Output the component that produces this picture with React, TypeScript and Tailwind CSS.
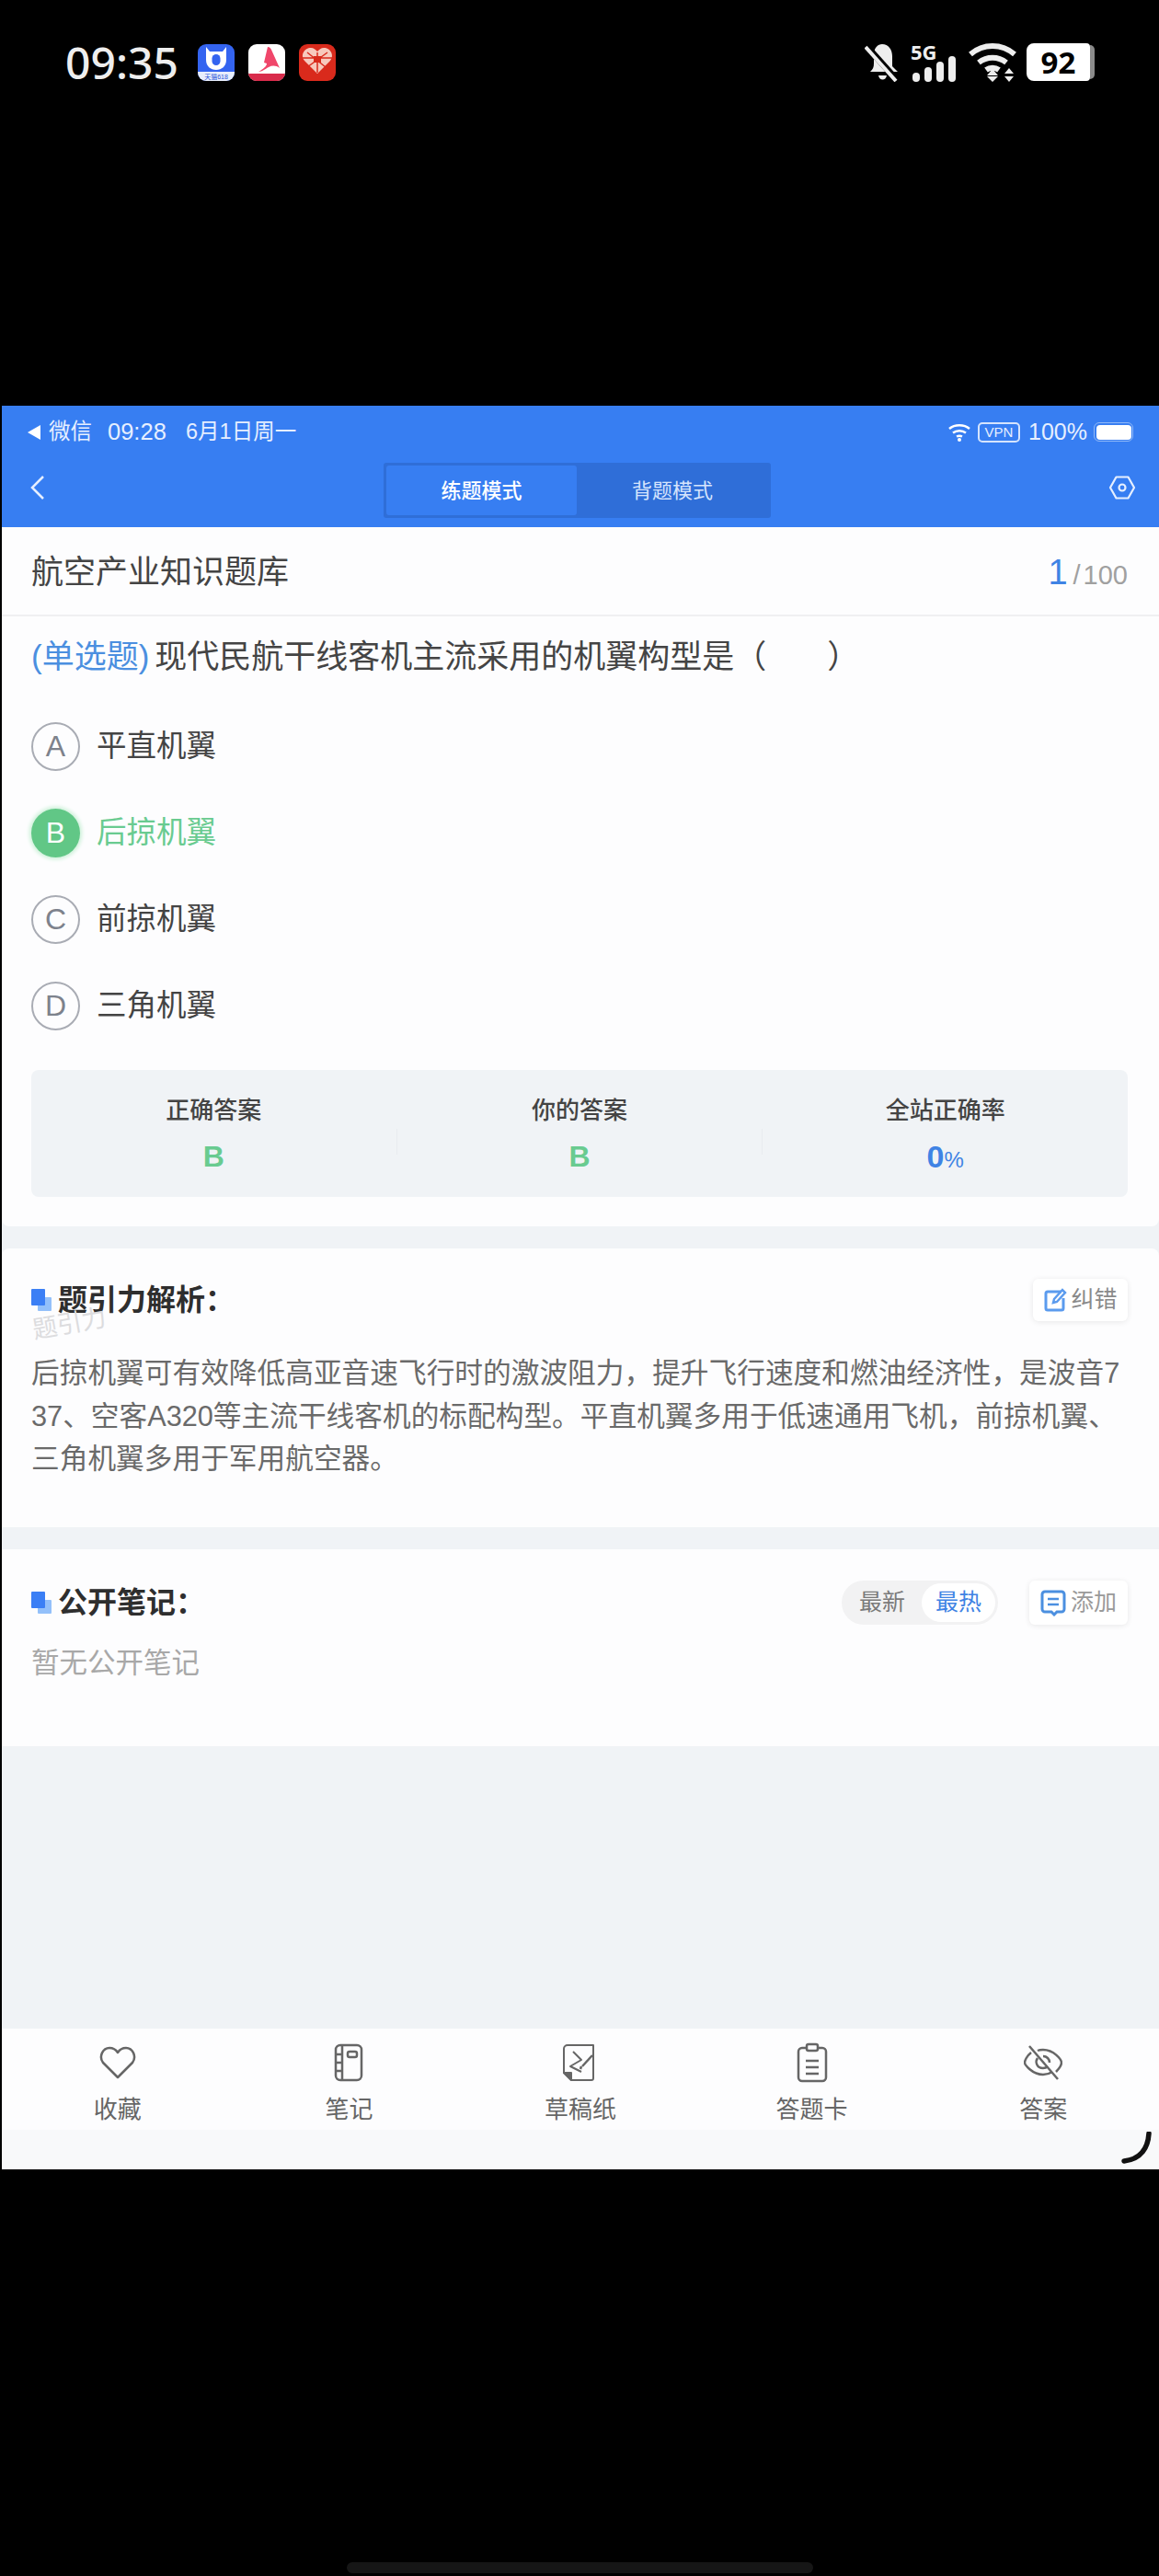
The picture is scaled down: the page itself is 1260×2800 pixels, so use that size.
const CJK = "font-['Liberation_Sans','Noto_Sans_CJK_SC',sans-serif]";

function TitleMark() {
  return (
    <svg width="22" height="24" viewBox="0 0 22 24" className="shrink-0">
      <rect x="7" y="9" width="15" height="15" rx="1" fill="#93c0fa" />
      <rect x="0" y="0" width="15" height="18" rx="1" fill="#3b7ff5" />
    </svg>
  );
}

function Option({ letter, text, on }: { letter: string; text: string; on?: boolean }) {
  return (
    <div className="flex h-[94px] items-center">
      <div
        className={
          on
            ? "flex h-[53px] w-[53px] items-center justify-center rounded-full bg-[#61c786] text-[32px] text-white shadow-[0_0_4px_2px_#c9f0d6]"
            : "flex h-[53px] w-[53px] items-center justify-center rounded-full border-2 border-[#a9acb4] text-[32px] text-[#7d828c]"
        }
      >
        {letter}
      </div>
      <div className={on ? "ml-[18px] text-[32.5px] text-[#69cb90]" : "ml-[18px] text-[32.5px] text-[#444444]"}>{text}</div>
    </div>
  );
}

function Stat({ label, children }: { label: string; children: React.ReactNode }) {
  return (
    <div className="flex flex-1 flex-col items-center">
      <div className="text-[26px] leading-[34px] font-medium text-[#444444]">{label}</div>
      <div className="mt-[16px] flex h-[34px] items-baseline leading-[34px]">{children}</div>
    </div>
  );
}

function TabItem({ label, children }: { label: string; children: React.ReactNode }) {
  return (
    <div className="flex flex-1 flex-col items-center pt-[15px]">
      <div className="flex h-[44px] items-center justify-center">{children}</div>
      <div className="mt-[14px] text-[26px] leading-[30px] text-[#666666]">{label}</div>
    </div>
  );
}

export default function App() {
  return (
    <div className={`flex h-[2800px] w-[1260px] flex-col bg-black ${CJK}`}>
      {/* phone status bar */}
      <div className="flex h-[441px] shrink-0 items-start justify-between pt-[47px] pr-[70px] pl-[71px]">
        <div className="flex items-center">
          <div className="w-[144px] font-['Noto_Sans',sans-serif] text-[48px] leading-[41px] font-medium text-[#eeeeee]">09:35</div>
          <svg width="40" height="40" viewBox="0 0 40 40" className="mt-[1px]">
            <rect width="40" height="40" rx="9" fill="#3464f0" />
            <path d="M0 30h40v1a9 9 0 0 1-9 9H9a9 9 0 0 1-9-9z" fill="#e8eefc" />
            <path d="M9 3l4 5h14l4-5v14c0 7-5 11-11 11S9 24 9 17z" fill="#fff" />
            <rect x="15.500" y="11" width="9" height="12" rx="4.500" fill="#3464f0" />
            <text x="20" y="38" textAnchor="middle" fontSize="7" fill="#2c55d8">天猫618</text>
          </svg>
          <svg width="40" height="40" viewBox="0 0 40 40" className="mt-[1px] ml-[15px]">
            <rect width="40" height="40" rx="9" fill="#fff" />
            <path d="M0 32h40a9 9 0 0 1-9 8H9a9 9 0 0 1-9-8z" fill="#d92b4b" />
            <path d="M21 3c2 0 3 1 4 3l9 20c-4-3-8-3-12-1-4 2-7 5-11 5 5-3 9-6 9-9l-3-1z" fill="#f0466a" />
          </svg>
          <svg width="40" height="40" viewBox="0 0 40 40" className="mt-[1px] ml-[15px]">
            <rect width="40" height="40" rx="9" fill="#d92a1c" />
            <path d="M20 32L6 18C1 12 6 4 13 4c3 0 5 2 7 4 2-2 4-4 7-4 7 0 12 8 7 14z" fill="#f7c9bd" />
            <path d="M20 9v22M9 9l20 16M31 9L9 25M4 15h32" stroke="#d92a1c" strokeWidth="1.500" />
            <rect x="16" y="13" width="8" height="7" fill="#d92a1c" />
          </svg>
        </div>
        <div className="flex items-start">
          <svg width="40" height="42" viewBox="0 0 40 42">
            <path d="M19 1c7 0 11 6 11 13v11l6 6H6c3-3 4-5 4-9V10C11 5 14 1 19 1z" fill="#eeeeee" />
            <path d="M15 35h9c-1 6-8 6-9 0z" fill="#eeeeee" />
            <path d="M2 3l34 38" stroke="#000" strokeWidth="7" />
            <path d="M1 4l33 37" stroke="#eeeeee" strokeWidth="4" />
          </svg>
          <div className="ml-[10px] w-[52px]">
            <div className="font-['Noto_Sans',sans-serif] text-[22px] leading-[18px] font-bold text-[#eeeeee]">5G</div>
            <svg width="52" height="28" viewBox="0 0 52 28" className="mt-[-4px]">
              <rect x="2" y="18" width="8" height="10" rx="4" fill="#eeeeee" />
              <rect x="15" y="12" width="8" height="16" rx="4" fill="#eeeeee" />
              <rect x="28" y="6" width="8" height="22" rx="4" fill="#eeeeee" />
              <rect x="41" y="0" width="8" height="28" rx="4" fill="#eeeeee" />
            </svg>
          </div>
          <svg width="54" height="42" viewBox="0 0 54 42" className="ml-[10px]" fill="none">
            <path d="M3 12c14-12 34-12 48 0" stroke="#eeeeee" strokeWidth="6" />
            <path d="M12 21c9-7 21-7 30 0" stroke="#eeeeee" strokeWidth="6" />
            <path d="M20 29c4-3 10-3 14 0" stroke="#eeeeee" strokeWidth="6" />
            <path d="M21 35h12l-6-7zM40 33h10l-5-6zM40 36h10l-5 6zM21 36l6 6 6-6z" fill="#eeeeee" />
          </svg>
          <div className="ml-[10px] flex h-[41px] w-[69px] items-center justify-center rounded-l-[8px] rounded-r-[4px] bg-white font-['Noto_Sans',sans-serif] text-[33px] font-bold text-black">92</div>
          <div className="mt-[2px] h-[37px] w-[5px] rounded-r-[5px] bg-[#8a8a8a]"></div>
        </div>
      </div>

      {/* app window */}
      <div className="relative flex h-[1917px] shrink-0 flex-col border-l-2 border-black bg-[#f0f3f6]">
        {/* blue header */}
        <div className="h-[132px] shrink-0 bg-[#377ef2]">
          <div className="flex h-[54px] items-center justify-between pt-[3px] pr-[28px] pl-[28px] text-[23.5px] text-[#e6efff]">
            <div className="flex items-center">
              <span className="mr-[9px] h-0 w-0 border-y-[8px] border-r-[14px] border-y-transparent border-r-white"></span>
              <span className="w-[64px]">微信</span>
              <span className="w-[85px] text-[25.500px]">09:28</span>
              <span>6月1日周一</span>
            </div>
            <div className="flex items-center">
              <svg width="24" height="20" viewBox="0 0 24 20" fill="none">
                <path d="M1 6c6-5 16-5 22 0M5 10.500c4-3 10-3 14 0M9 14.500c2-1 4-1 6 0" stroke="#fff" strokeWidth="2.500" />
                <circle cx="12" cy="18" r="2" fill="#fff" />
              </svg>
              <span className="ml-[8px] flex h-[22px] w-[46px] items-center justify-center rounded-[5px] border-2 border-[#d5e4fd] text-[15px] leading-none font-medium">VPN</span>
              <span className="ml-[9px] w-[71px] text-[25px]">100%</span>
              <span className="flex h-[21px] w-[43px] items-center justify-center rounded-[6px] border border-[#8fb8f8]">
                <span className="h-[16px] w-[38px] rounded-[4px] bg-white"></span>
              </span>
            </div>
          </div>
          <div className="flex h-[78px] items-center justify-between pr-[25px] pb-[2px] pl-[30px]">
            <svg width="18" height="28" viewBox="0 0 18 28" fill="none" className="mb-[6px]">
              <path d="M15 2L3 14l12 12" stroke="#e6efff" strokeWidth="2.500" />
            </svg>
            <div className="flex h-[60px] w-[421px] items-stretch rounded-[3px] bg-[#2f6ed8] p-[3px]">
              <div className="flex w-[207px] items-center justify-center rounded-[3px] bg-[#377ef2] text-[22px] font-medium text-white">练题模式</div>
              <div className="flex flex-1 items-center justify-center text-[22px] text-[#d5e4fd]">背题模式</div>
            </div>
            <svg width="30" height="30" viewBox="0 0 30 30" fill="none" className="mb-[6px]">
              <path d="M8.500 3.500h13L28 15l-6.500 11.500h-13L2 15z" stroke="#e6efff" strokeWidth="2.200" strokeLinejoin="round" />
              <circle cx="15" cy="15" r="3.500" stroke="#e6efff" strokeWidth="2.200" />
            </svg>
          </div>
        </div>

        {/* question */}
        <div className="shrink-0 rounded-b-[8px] bg-[#fdfdfe]">
          <div className="flex h-[97px] items-center justify-between border-b-2 border-[#f0f0f2] pt-[4px] pr-[34px] pl-[32px]">
            <div className="text-[35px] text-[#444444]">航空产业知识题库</div>
            <div className="flex items-baseline">
              <span className="text-[38px] text-[#3f83e4]">1</span>
              <span className="ml-[6px] text-[29px] text-[#a0a0a0]">/</span>
              <span className="ml-[3px] text-[29px] text-[#a0a0a0]">100</span>
            </div>
          </div>
          <div className="pr-[34px] pb-[32px] pl-[32px]">
            <div className="flex h-[86px] items-center whitespace-pre pt-[2px] text-[35px] text-[#444444]">
              <span className="mr-[6px] text-[#4b8fe0]">(单选题)</span>
              现代民航干线客机主流采用的机翼构型是（
              <span className="inline-block w-[66px]"></span>）
            </div>
            <div className="pt-[8px]">
              <Option letter="A" text="平直机翼" />
              <Option letter="B" text="后掠机翼" on />
              <Option letter="C" text="前掠机翼" />
              <Option letter="D" text="三角机翼" />
            </div>
            <div className="mt-[23px] flex h-[138px] items-center rounded-[8px] bg-[#f0f3f6]">
              <Stat label="正确答案"><span className="text-[32px] font-bold text-[#69cb90]">B</span></Stat>
              <div className="mt-[18px] h-[28px] w-px bg-[#e8ebef]"></div>
              <Stat label="你的答案"><span className="text-[32px] font-bold text-[#69cb90]">B</span></Stat>
              <div className="mt-[18px] h-[28px] w-px bg-[#e8ebef]"></div>
              <Stat label="全站正确率">
                <span className="text-[34px] font-bold text-[#3f83e4]">0</span>
                <span className="text-[24px] text-[#3f83e4]">%</span>
              </Stat>
            </div>
          </div>
        </div>

        {/* analysis */}
        <div className="relative mt-[24px] h-[303px] shrink-0 rounded-t-[8px] bg-[#fdfdfe] pr-[34px] pl-[32px]">
          <div className="flex h-[112px] items-center justify-between">
            <div className="flex items-center">
              <TitleMark />
              <span className="ml-[7px] text-[32px] font-bold text-[#2e2e2e]">题引力解析：</span>
            </div>
            <div className="flex h-[46px] w-[103px] items-center justify-center rounded-[6px] bg-white shadow-[0_1px_6px_rgba(0,0,0,0.09)]">
              <svg width="26" height="28" viewBox="0 0 26 28" fill="none" className="mr-[4px]">
                <path d="M20 5H5a2 2 0 0 0-2 2v16a2 2 0 0 0 2 2h15a2 2 0 0 0 2-2V12" stroke="#5b9bee" strokeWidth="3" />
                <path d="M11 17l1-4L21 3l3 3-9 10z" stroke="#5b9bee" strokeWidth="2.500" />
              </svg>
              <span className="text-[25px] text-[#8a8a8a]">纠错</span>
            </div>
          </div>
          <div className="absolute top-[62px] left-[33px] -rotate-[10deg] text-[27px] text-[#dcdcde]">题引力</div>
          <div className="mt-[1px] w-[1192px] text-[30.700px] leading-[46.500px] break-all text-[#6a6a6a]">
            后掠机翼可有效降低高亚音速飞行时的激波阻力，提升飞行速度和燃油经济性，是波音737、空客A320等主流干线客机的标配构型。平直机翼多用于低速通用飞机，前掠机翼、三角机翼多用于军用航空器。
          </div>
        </div>

        {/* notes */}
        <div className="mt-[24px] h-[214px] shrink-0 bg-[#fdfdfe] pr-[34px] pl-[32px]">
          <div className="flex h-[116px] items-center justify-between">
            <div className="flex items-center">
              <TitleMark />
              <span className="ml-[7px] text-[32px] font-bold text-[#2e2e2e]">公开笔记：</span>
            </div>
            <div className="flex items-center">
              <div className="flex h-[48px] w-[170px] items-center rounded-full bg-[#f2f2f3] p-[3px]">
                <span className="w-[84px] pl-[16px] text-[25px] text-[#7a7a7a]">最新</span>
                <span className="flex h-[42px] flex-1 items-center justify-center rounded-full bg-white text-[25px] text-[#3f83e4]">最热</span>
              </div>
              <div className="ml-[34px] flex h-[48px] w-[107px] items-center justify-center rounded-[6px] bg-white shadow-[0_1px_6px_rgba(0,0,0,0.09)]">
                <svg width="28" height="30" viewBox="0 0 28 30" fill="none" className="mr-[5px]">
                  <path d="M5 3h18a3 3 0 0 1 3 3v16a3 3 0 0 1-3 3h-5l-3 3-3-3H5a3 3 0 0 1-3-3V6a3 3 0 0 1 3-3z" stroke="#4b8fe0" strokeWidth="3" />
                  <path d="M8 11h12M8 17h12" stroke="#4b8fe0" strokeWidth="2.500" />
                </svg>
                <span className="text-[25px] text-[#9a9a9a]">添加</span>
              </div>
            </div>
          </div>
          <div className="-mt-[15px] text-[30.500px] leading-[44px] text-[#a8a8a8]">暂无公开笔记</div>
        </div>

        <div className="flex-1"></div>

        {/* tab bar */}
        <div className="flex h-[110px] shrink-0 bg-[#fdfdfe]">
          <TabItem label="收藏">
            <svg width="40" height="38" viewBox="0 0 40 38" fill="none">
              <path d="M20 35L4 19C-1 12 4 3 11 3c4 0 7 2 9 5 2-3 5-5 9-5 7 0 12 9 7 16z" stroke="#666" strokeWidth="2.500" strokeLinejoin="round" />
            </svg>
          </TabItem>
          <TabItem label="笔记">
            <svg width="32" height="42" viewBox="0 0 32 42" fill="none" stroke="#666" strokeWidth="2.500">
              <rect x="2" y="2" width="28" height="38" rx="5" />
              <path d="M9 2v38M2 12h7M2 21h7M2 30h7" />
              <rect x="15" y="9" width="10" height="6" rx="2" />
            </svg>
          </TabItem>
          <TabItem label="草稿纸">
            <svg width="40" height="42" viewBox="0 0 40 42" fill="none" stroke="#666" strokeWidth="2" strokeLinejoin="round">
              <path d="M2 6a4 4 0 0 1 4-4h28v36a2 2 0 0 1-2 2H10l-8-8z" />
              <path d="M10 40v-8H2z" fill="#666" />
              <path d="M12 9l9 9-12 7 12 6" />
              <path d="M22 25L33 13M20 28l1-3" strokeWidth="2.500" />
            </svg>
          </TabItem>
          <TabItem label="答题卡">
            <svg width="34" height="44" viewBox="0 0 34 44" fill="none" stroke="#666" strokeWidth="2.500">
              <path d="M10 6H6a4 4 0 0 0-4 4v28a4 4 0 0 0 4 4h22a4 4 0 0 0 4-4V10a4 4 0 0 0-4-4h-4" />
              <rect x="11" y="2" width="12" height="7" rx="2" />
              <path d="M10 20h14M10 27h14M10 34h14" />
            </svg>
          </TabItem>
          <TabItem label="答案">
            <svg width="42" height="40" viewBox="0 0 42 40" fill="none" stroke="#666" strokeWidth="2.500">
              <path d="M8 9C3 13 1 18 1 20c0 2 8 13 20 13 4 0 7-1 10-3M15 7c2-1 4-1 6-1 12 0 20 11 20 14 0 2-2 6-6 10" />
              <path d="M15 15c-3 4-1 11 6 11 2 0 4-1 5-2M21 13c4 0 7 3 7 7" />
              <path d="M6 2l31 36" />
            </svg>
          </TabItem>
        </div>
        <div className="relative h-[43px] shrink-0 bg-[#f8f9fa]">
          <svg width="36" height="38" viewBox="0 0 36 38" fill="none" className="absolute top-[2px] right-[6px]">
            <path d="M31 2c-1 15-8 28-27 30" stroke="#111" strokeWidth="5.500" strokeLinecap="round" />
          </svg>
        </div>
      </div>

      {/* home indicator */}
      <div className="flex flex-1 items-end justify-center pb-[3px]">
        <div className="h-[12px] w-[507px] rounded-full bg-[#161616]"></div>
      </div>
    </div>
  );
}
